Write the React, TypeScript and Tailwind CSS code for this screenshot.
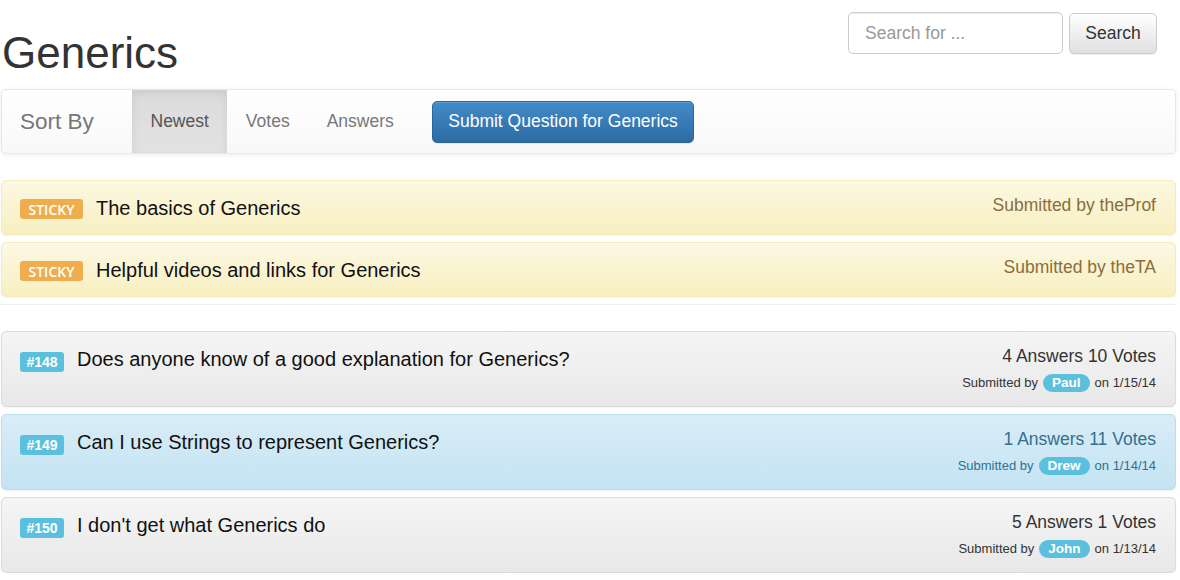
const STICKIES = [
  { title: 'The basics of Generics', by: 'theProf' },
  { title: 'Helpful videos and links for Generics', by: 'theTA' },
]

const QUESTIONS = [
  { id: 148, title: 'Does anyone know of a good explanation for Generics?', answers: 4, votes: 10, by: 'Paul', date: '1/15/14', info: false },
  { id: 149, title: 'Can I use Strings to represent Generics?', answers: 1, votes: 11, by: 'Drew', date: '1/14/14', info: true },
  { id: 150, title: "I don't get what Generics do", answers: 5, votes: 1, by: 'John', date: '1/13/14', info: false },
]

export default function App() {
  return (
    <div className="w-[1180px] pl-[1px] pr-[4px] bg-white text-[#333] font-['Liberation_Sans',Arial,sans-serif]">
      <div className="h-[89px] flex items-start justify-between">
        <h1 className="pt-[29px] pl-[1px] text-[44px] leading-[48px] text-[#333] font-normal">Generics</h1>
        <div className="flex items-center gap-[6px] pt-[12px] mr-[19px]">
          <input placeholder="Search for ..."
            className="w-[215px] h-[42px] rounded-[5px] border border-[#ccc] px-[16px] text-[17.5px] text-[#555] placeholder:text-[#999] shadow-[inset_0_1px_1px_rgba(0,0,0,0.075)] focus:outline-none" />
          <button className="w-[88px] h-[41px] mt-[1px] rounded-[5px] border border-[#ccc] bg-gradient-to-b from-white to-[#e0e0e0] text-[17.5px] text-[#333] shadow-[0_1px_1px_rgba(0,0,0,0.075)]">
            Search
          </button>
        </div>
      </div>

      <div className="h-[65px] flex items-stretch rounded-[5px] border border-[#e7e7e7] bg-gradient-to-b from-white to-[#f8f8f8] shadow-[0_1px_5px_rgba(0,0,0,0.075)]">
        <div className="w-[130px] pl-[18px] flex items-center text-[22.5px] text-[#777]">Sort By</div>
        <div className="px-[18.5px] flex items-center text-[17.5px] text-[#555] bg-gradient-to-b from-[#dbdbdb] to-[#e2e2e2] shadow-[inset_0_3px_9px_rgba(0,0,0,0.075)]">Newest</div>
        <div className="px-[18.5px] flex items-center text-[17.5px] text-[#777]">Votes</div>
        <div className="px-[18.5px] flex items-center text-[17.5px] text-[#777]">Answers</div>
        <div className="ml-[20px] flex items-center">
          <button className="h-[42px] px-[15px] rounded-[5px] border border-[#2b669a] bg-gradient-to-b from-[#428bca] to-[#2d6ca2] text-white text-[17.5px] shadow-[inset_0_1px_0_rgba(255,255,255,0.15),0_1px_1px_rgba(0,0,0,0.075)]">
            Submit Question for Generics
          </button>
        </div>
      </div>

      <div className="mt-[26px] flex flex-col gap-[7px]">
        {STICKIES.map(s => (
          <div key={s.title} className="h-[55px] flex items-center justify-between pl-[18px] pr-[19px] rounded-[5px] border border-[#f7ebb8] bg-gradient-to-b from-[#fcf8e3] to-[#f8efc0] shadow-[0_1px_2px_rgba(0,0,0,0.05)]">
            <div className="flex items-center gap-[13px]">
              <span className="w-[63px] h-[20px] mt-[3px] flex items-center justify-center rounded-[3px] bg-[#f0ad4e] text-white text-[14px] font-semibold font-['Open_Sans',sans-serif]">STICKY</span>
              <span className="text-[20px] text-[#111]">{s.title}</span>
            </div>
            <span className="text-[17.5px] text-[#8a6d3b] -mt-[5px]">Submitted by {s.by}</span>
          </div>
        ))}
      </div>

      <hr className="mt-[7px] mb-[26px] border-0 border-t border-[#eee]" />

      <div className="flex flex-col gap-[7px]">
        {QUESTIONS.map(q => (
          <div key={q.id}
            className={`flex justify-between pl-[18px] pr-[19px] pt-[11px] pb-[10px] rounded-[5px] border shadow-[0_1px_2px_rgba(0,0,0,0.05)] ${q.info ? 'border-[#b9def0] bg-gradient-to-b from-[#d9edf7] to-[#c4e3f3]' : 'border-[#dcdcdc] bg-gradient-to-b from-[#f5f5f5] to-[#e8e8e8]'}`}>
            <div className="flex items-center gap-[13px] h-[24px] mt-[7px]">
              <span className="w-[44px] h-[20px] flex items-center justify-center rounded-[3px] bg-[#5bc0de] text-white text-[14px] font-bold">#{q.id}</span>
              <span className="text-[20px] text-[#111] -mt-[6px]">{q.title}</span>
            </div>
            <div className={`text-right ${q.info ? 'text-[#31708f]' : 'text-[#333]'}`}>
              <div className="text-[17.5px] leading-[26px]">{q.answers} Answers {q.votes} Votes</div>
              <div className="text-[13px] leading-[27px] flex items-center justify-end gap-[5px]">
                <span>Submitted by</span>
                <span className="h-[18px] px-[9px] flex items-center rounded-full bg-[#5bc0de] text-white font-bold text-[13.5px]">{q.by}</span>
                <span>on {q.date}</span>
              </div>
            </div>
          </div>
        ))}
      </div>
    </div>
  )
}
